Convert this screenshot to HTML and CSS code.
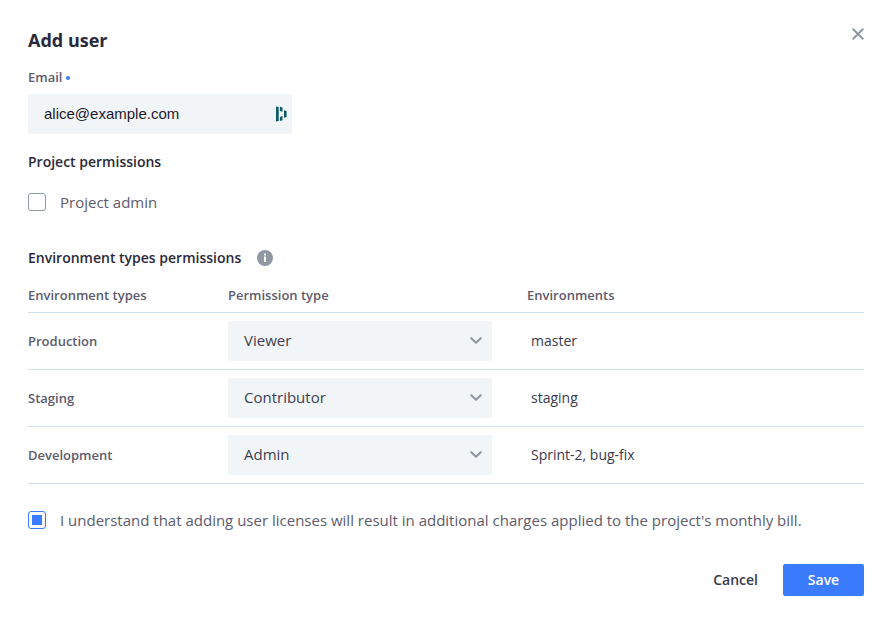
FILE: index.html
```html
<!DOCTYPE html>
<html lang="en">
<head>
<meta charset="utf-8">
<title>Add user</title>
<link rel="stylesheet" href="styles.css">
</head>
<body>
<main class="dialog">
  <header class="header">
    <h1>Add user</h1>
    <svg class="close" width="12" height="12" viewBox="0 0 12 12"><path d="M.7.7l10.600 10.600M11.300.7L.7 11.300"/></svg>
  </header>
  <label class="field-label" for="email">Email<span class="dot"></span></label>
  <div class="input" id="email"><span>alice@example.com</span>
    <svg width="12" height="16" viewBox="0 0 12 16"><path d="M1 .4l2.700.6v14l-2.700.4zM4.900.8l2.600.8v4.100l-2.600-.8zM4.900 10.900l2.600-.8v4.100l-2.600.8zM9 4.200l2.600.8v6l-2.600.8z"/></svg>
  </div>
  <h2 class="project">Project permissions</h2>
  <div class="check"><span class="box"></span><span>Project admin</span></div>
  <h2 class="environment"><span>Environment types permissions</span>
    <svg width="16" height="16" viewBox="0 0 16 16"><circle cx="8" cy="8" r="8"/><path d="M7 3.500h2v2H7zM7 6.500h2v5.500H7z"/></svg>
  </h2>
  <section class="table">
    <div class="row head"><span>Environment types</span><span>Permission type</span><span>Environments</span></div>
    <div class="row"><span class="type">Production</span><div class="select"><span>Viewer</span><svg class="chev" width="12" height="8" viewBox="0 0 12 8"><path d="M1.300 1.300L6 5.700l4.700-4.400"/></svg></div><span class="env">master</span></div>
    <div class="row"><span class="type">Staging</span><div class="select"><span>Contributor</span><svg class="chev" width="12" height="8" viewBox="0 0 12 8"><path d="M1.300 1.300L6 5.700l4.700-4.400"/></svg></div><span class="env">staging</span></div>
    <div class="row"><span class="type">Development</span><div class="select"><span>Admin</span><svg class="chev" width="12" height="8" viewBox="0 0 12 8"><path d="M1.300 1.300L6 5.700l4.700-4.400"/></svg></div><span class="env">Sprint-2, bug-fix</span></div>
  </section>
  <div class="check agree"><span class="box checked"></span><span>I understand that adding user licenses will result in additional charges applied to the project's monthly bill.</span></div>
  <footer class="actions"><button class="cancel">Cancel</button><button class="save">Save</button></footer>
</main>
</body>
</html>
```
FILE: styles.css
```css
* { box-sizing: border-box; }
body { margin: 0; background: #fff; color: #2a293b; font-family: "Open Sans", sans-serif; }
.dialog { width: 891px; height: 631px; padding: 28px 27px 0 28px; }
.header { display: flex; justify-content: space-between; height: 40px; }
h1 { margin: 0; font-size: 18px; line-height: 24px; font-weight: 700; }
.close { stroke: #8f98a3; stroke-width: 2; }
.field-label { display: flex; align-items: center; height: 18px; font-size: 13px; font-weight: 600; color: #5d5b6d; }
.dot { width: 4px; height: 4px; border-radius: 50%; background: #3b7cff; margin: 1px 0 0 4px; }
.input { display: flex; align-items: center; justify-content: space-between; width: 264px; height: 40px; margin-top: 8px; padding: 0 5px 0 16px; border-radius: 2px; background: #f2f5f8; color: #1a192b; font: 15px "Liberation Sans", sans-serif; }
.input span { padding-bottom: 2px; }
.input svg { fill: #0e5b68; }
h2 { display: flex; align-items: center; margin: 0; height: 20px; font-size: 14px; font-weight: 600; }
.project { margin-top: 17px; }
.check { display: flex; align-items: center; gap: 14px; height: 20px; margin-top: 21px; font-size: 15px; color: #5d5b6d; white-space: nowrap; }
.box { width: 18px; height: 18px; border: 1px solid #8f98a3; border-radius: 3px; flex: none; }
.checked { border-color: #3b7cff; background: #3b7cff; background-clip: content-box; padding: 3px; }
.environment { margin-top: 36px; gap: 16px; }
.environment span { padding-bottom: 2px; }
.environment circle { fill: #8f98a3; }
.environment path { fill: #fff; }
.row { display: grid; grid-template-columns: 200px 299px 1fr; align-items: center; height: 57px; border-bottom: 1px solid #cfdeeb; }
.head { height: 45px; padding-top: 10px; font-size: 13px; font-weight: 600; color: #5d5b6d; }
.type { font-size: 13px; font-weight: 600; color: #5d5b6d; }
.select { display: flex; align-items: center; justify-content: space-between; width: 264px; height: 40px; padding: 0 10px 0 16px; border-radius: 2px; background: #f2f5f8; color: #3f3e50; font-size: 15px; }
.select span { padding-bottom: 2px; }
.chev { fill: none; stroke: #8f98a3; stroke-width: 2.2; stroke-linecap: round; stroke-linejoin: round; }
.env { padding: 0 0 2px 4px; color: #3a394b; font-size: 14px; }
.agree { margin-top: 26px; }
.actions { display: flex; justify-content: flex-end; gap: 25px; margin-top: 34px; }
button { border: 0; padding: 0 0 2px; height: 32px; background: none; color: #3a394b; font: 600 14px "Open Sans", sans-serif; }
.save { width: 81px; border-radius: 2px; background: #3b7cff; color: #fff; }
```
